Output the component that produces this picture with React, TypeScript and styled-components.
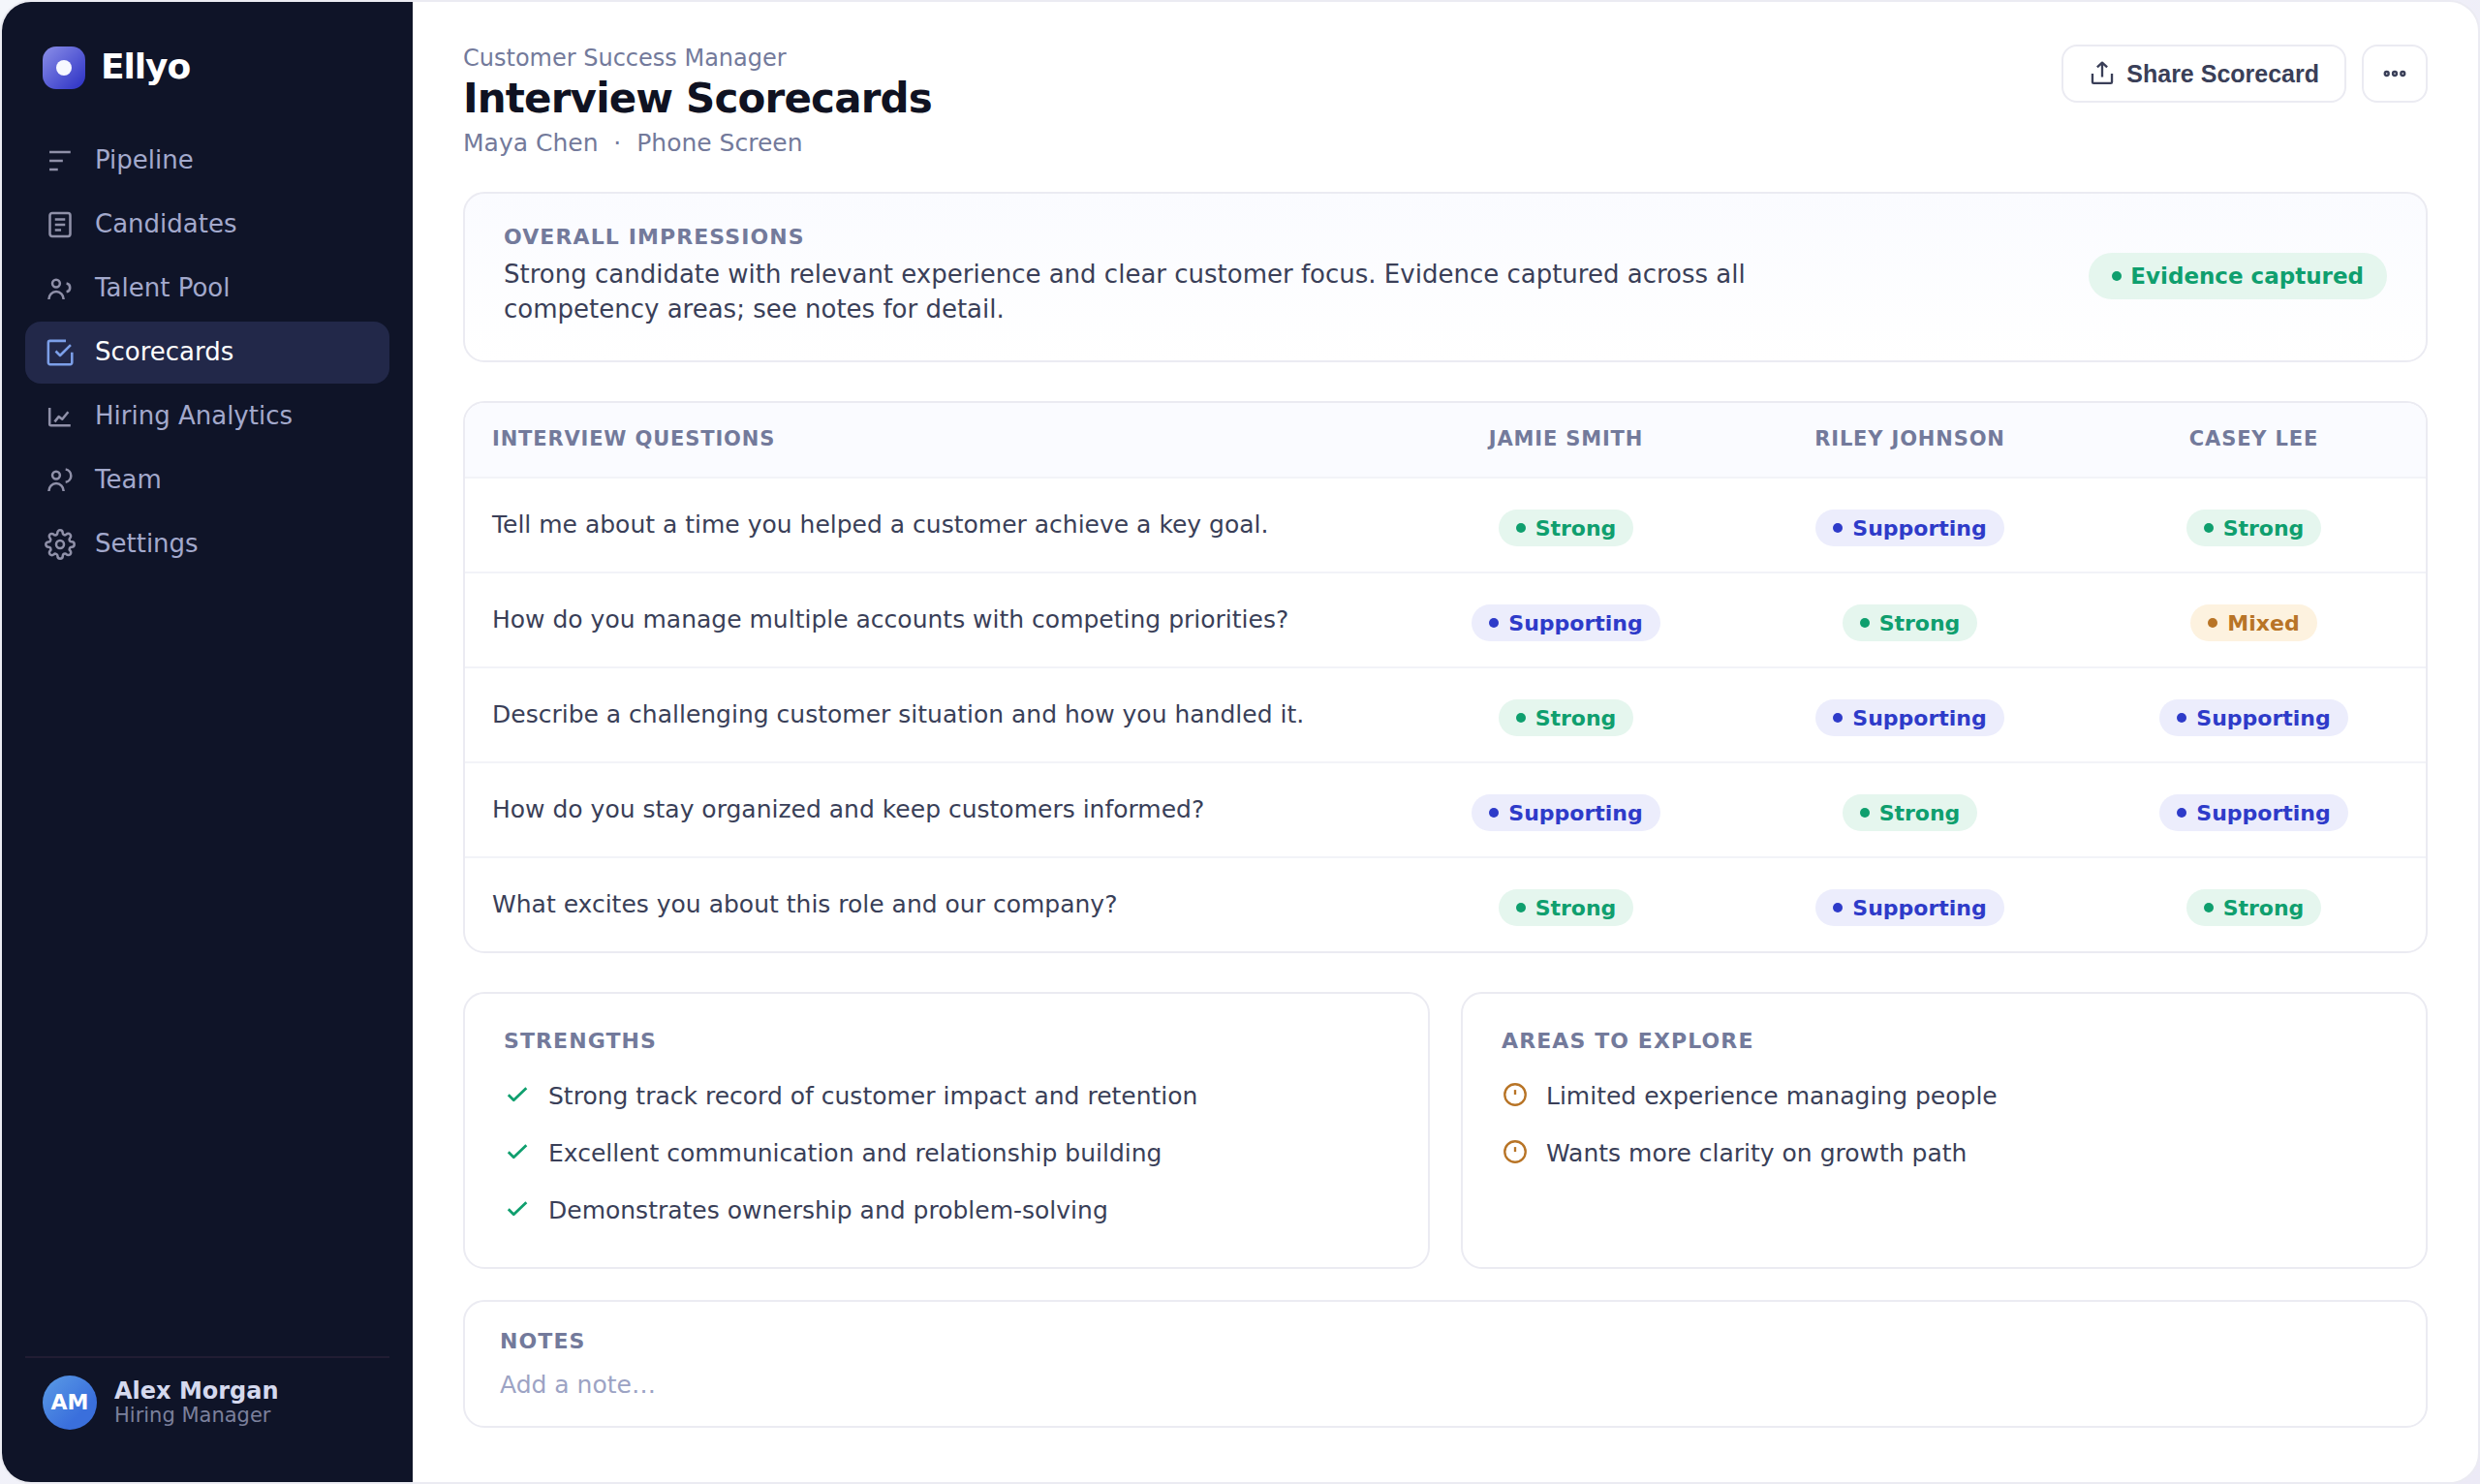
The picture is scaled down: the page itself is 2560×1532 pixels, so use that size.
import React from "react";
import styled, { createGlobalStyle, css } from "styled-components";

const color = {
  ink: "#0f1222",
  text: "#3a3f58",
  muted: "#737a9b",
  faint: "#9ca3c4",
  line: "#ebebf2",
  rowLine: "#f2f3f8",
  tint: "#fafbff",
  side: "#0f1428",
  sideActive: "#222849",
  sideText: "#a3a9cc",
  sideIcon: "#8f90a8",
  blue: "#2e3bc9",
  green: "#0f9f6e",
  amber: "#b87426",
};

const GlobalStyle = createGlobalStyle`
  *, *::before, *::after { box-sizing: border-box; }
  body {
    margin: 0;
    background: linear-gradient(135deg, #f4f6fb 0%, #eceaf6 100%);
    color: ${color.text};
    font-family: "DejaVu Sans", sans-serif;
    font-size: 25px;
  }
  h1, h2, p, ul { margin: 0; padding: 0; }
`;

const Frame = styled.div`
  display: flex;
  min-height: 100vh;
  border: 2px solid ${color.line};
  border-radius: 32px;
  background: #fff;
  overflow: hidden;
`;

/* Sidebar */

const Sidebar = styled.aside`
  display: flex;
  flex-direction: column;
  flex: none;
  width: 424px;
  padding: 46px 24px 54px;
  background: ${color.side};
`;

const Brand = styled.div`
  display: flex;
  align-items: center;
  gap: 16px;
  padding: 0 18px;
  height: 44px;
  color: #fff;
  font-size: 36px;
  font-weight: 700;
  line-height: 40px;
  letter-spacing: -0.03em;
`;

const BrandName = styled.span`
  padding-bottom: 2px;
`;

const BrandMark = styled.span`
  display: grid;
  place-items: center;
  width: 44px;
  height: 44px;
  border-radius: 14px;
  background: linear-gradient(135deg, #8b8fe8 0%, #2a2fc4 100%);

  &::after {
    content: "";
    width: 16px;
    height: 16px;
    border-radius: 50%;
    background: #f7f8ff;
  }
`;

const Nav = styled.nav`
  display: flex;
  flex-direction: column;
  gap: 2px;
  margin-top: 42px;
`;

const NavLink = styled.a<{ $active?: boolean }>`
  display: flex;
  align-items: center;
  gap: 18px;
  height: 64px;
  padding: 0 18px;
  border-radius: 16px;
  color: ${(p) => (p.$active ? "#fff" : color.sideText)};
  background: ${(p) => (p.$active ? color.sideActive : "transparent")};
  font-size: 26px;
  line-height: 30px;
  text-decoration: none;

  svg {
    color: ${(p) => (p.$active ? "#7c9fe8" : color.sideIcon)};
  }
`;

const NavText = styled.span`
  padding-bottom: 2px;
`;

const User = styled.div`
  display: flex;
  align-items: center;
  gap: 18px;
  margin-top: auto;
  padding: 18px 18px 0;
  border-top: 2px solid #211d33;
`;

const Avatar = styled.span`
  display: grid;
  place-items: center;
  width: 56px;
  height: 56px;
  padding-bottom: 2px;
  border-radius: 50%;
  background: linear-gradient(135deg, #5b9ce6 0%, #3a6fdc 70%);
  color: #fff;
  font-size: 22px;
  font-weight: 700;
`;

const UserName = styled.div`
  color: #d5d9ee;
  font-size: 24px;
  font-weight: 700;
  line-height: 26px;
`;

const UserRole = styled.div`
  color: #7b809c;
  font-size: 21px;
  line-height: 24px;
`;

/* Main column */

const Main = styled.main`
  flex: 1;
  min-width: 0;
  padding: 44px 52px;
`;

const Header = styled.header`
  display: flex;
  align-items: flex-start;
  justify-content: space-between;
  margin-bottom: 35px;
`;

const Eyebrow = styled.p`
  color: ${color.muted};
  font-size: 24px;
  line-height: 28px;
`;

const Title = styled.h1`
  margin-top: 4px;
  color: ${color.ink};
  font-size: 42px;
  font-weight: 700;
  line-height: 48px;
  letter-spacing: -0.02em;
`;

const Subtitle = styled.p`
  margin-top: 7px;
  color: ${color.muted};
  line-height: 30px;
  white-space: pre;
`;

const Actions = styled.div`
  display: flex;
  gap: 16px;
`;

const Button = styled.button<{ $square?: boolean }>`
  display: inline-flex;
  align-items: center;
  justify-content: center;
  gap: 11px;
  height: 60px;
  padding: 0 ${(p) => (p.$square ? "18px" : "26px")};
  border: 2px solid ${color.line};
  border-radius: 16px;
  background: #fff;
  color: ${color.text};
  font-family: "Liberation Sans", Arial, sans-serif;
  font-size: 25px;
  font-weight: 700;
`;

const card = css`
  border: 2px solid ${color.line};
  border-radius: 22px;
  background: #fff;
`;

const label = css`
  color: ${color.muted};
  font-size: 22px;
  font-weight: 700;
  line-height: 26px;
  letter-spacing: 0.05em;
  text-transform: uppercase;
`;

const Heading = styled.h2`
  ${label}
`;

const Summary = styled.section`
  ${card}
  display: flex;
  align-items: center;
  justify-content: space-between;
  gap: 40px;
  padding: 32px 40px 35px;
  background: linear-gradient(180deg, ${color.tint} 0%, #fff 100%);
`;

const SummaryText = styled.p`
  max-width: 1400px;
  margin-top: 7px;
  font-size: 26px;
  line-height: 36px;
`;

type Tone = "strong" | "supporting" | "mixed";

const tones: Record<Tone, { fg: string; bg: string; text: string }> = {
  strong: { fg: color.green, bg: "#e5f6ee", text: "Strong" },
  supporting: { fg: color.blue, bg: "#ecedfc", text: "Supporting" },
  mixed: { fg: color.amber, bg: "#fdf2df", text: "Mixed" },
};

const Pill = styled.span<{ $tone: Tone; $large?: boolean }>`
  display: flex;
  align-items: center;
  flex: none;
  gap: ${(p) => (p.$large ? "9px" : "10px")};
  width: fit-content;
  height: ${(p) => (p.$large ? "48px" : "38px")};
  margin: 0 auto;
  padding: 0 ${(p) => (p.$large ? "24px" : "18px")};
  border-radius: 24px;
  background: ${(p) => tones[p.$tone].bg};
  color: ${(p) => tones[p.$tone].fg};
  font-size: ${(p) => (p.$large ? "23px" : "22px")};
  font-weight: 700;

  &::before {
    content: "";
    width: 10px;
    height: 10px;
    border-radius: 50%;
    background: currentColor;
  }
`;

const TableCard = styled.section`
  ${card}
  margin-top: 40px;
  overflow: hidden;
`;

const Table = styled.table`
  width: 100%;
  border-collapse: separate;
  border-spacing: 0;
  table-layout: fixed;
`;

const HeadCell = styled.th`
  ${label}
  width: 17.54%;
  height: 78px;
  padding: 0 0 2px;
  border-bottom: 2px solid ${color.rowLine};
  background: ${color.tint};
  font-size: 21px;
  letter-spacing: 0.04em;
  text-align: center;

  &:first-child {
    width: auto;
    padding-left: 28px;
    text-align: left;
  }
`;

const Row = styled.tr`
  & > * {
    height: 98px;
    border-bottom: 2px solid ${color.rowLine};
  }
  &:last-child > * {
    height: 96px;
    border-bottom: 0;
  }
`;

const Question = styled.th`
  padding: 0 0 2px 28px;
  font-weight: 400;
  text-align: left;
`;

const Rating = styled.td`
  padding: 6px 0 0;
`;

const Columns = styled.div`
  display: grid;
  grid-template-columns: 1fr 1fr;
  gap: 32px;
  margin-top: 40px;
`;

const Panel = styled.section`
  ${card}
  padding: 36px 40px 40px;
`;

const List = styled.ul`
  display: grid;
  gap: 23px;
  margin-top: 26px;
  list-style: none;
`;

const Item = styled.li<{ $color: string }>`
  display: flex;
  align-items: flex-start;
  gap: 18px;
  line-height: 36px;

  svg {
    margin-top: 2px;
    color: ${(p) => p.$color};
  }
`;

const Notes = styled.section`
  ${card}
  display: flex;
  flex-direction: column;
  margin-top: 32px;
  padding: 28px 36px 25px;
`;

const NotesLabel = styled.label`
  ${label}
`;

const NotesInput = styled.input`
  width: 100%;
  height: 36px;
  margin-top: 13px;
  padding: 0;
  border: 0;
  outline: 0;
  background: transparent;
  color: ${color.text};
  font: inherit;

  &::placeholder {
    color: ${color.faint};
    opacity: 1;
  }
`;

/* Icons */

const Glyph = styled.svg`
  display: block;
  flex: none;
  fill: none;
  stroke: currentColor;
  stroke-linejoin: round;
`;

type IconProps = { size?: number; stroke?: number; children: React.ReactNode };

const Icon = ({ size = 36, stroke = 1.7, children }: IconProps) => (
  <Glyph width={size} height={size} viewBox="0 0 24 24" strokeWidth={stroke} aria-hidden="true">
    {children}
  </Glyph>
);

const person = (
  <>
    <circle cx="9.3" cy="8.4" r="2.6" />
    <path d="M4.3 19.4v-.3a5.05 5.05 0 0 1 10.1 0v.3" />
  </>
);

const nav = [
  {
    name: "Pipeline",
    icon: <path d="M4.7 6h14.5M4.7 12h9.2M4.7 18h5.8" />,
  },
  {
    name: "Candidates",
    icon: (
      <>
        <rect x="5" y="4" width="14" height="16" rx="1.6" />
        <path d="M8.5 8.3h7M8.5 12h7M8.5 15.7h4.2" />
      </>
    ),
  },
  {
    name: "Talent Pool",
    icon: (
      <>
        {person}
        <path d="M16.4 8.4a2.95 2.95 0 0 1 0 5.8" />
      </>
    ),
  },
  {
    name: "Scorecards",
    active: true,
    icon: (
      <>
        <path d="M16 3.9H5.1a1.2 1.2 0 0 0-1.2 1.2v13.8a1.2 1.2 0 0 0 1.2 1.2h13.9a1.2 1.2 0 0 0 1.2-1.2v-7" />
        <path d="M9 11l3 3 7.3-7.3" />
      </>
    ),
  },
  {
    name: "Hiring Analytics",
    icon: (
      <>
        <path d="M4.8 6v11.2a1 1 0 0 0 1 1h13.4" />
        <path d="M8.3 15.6l2.8-3.5 2.4 1.7 4.1-5" />
      </>
    ),
  },
  {
    name: "Team",
    icon: (
      <>
        {person}
        <path d="M15.8 4.4a4.4 4.4 0 0 1 0 8.7" />
      </>
    ),
  },
  {
    name: "Settings",
    icon: (
      <g transform="translate(12 12) scale(.89) translate(-12 -12)" strokeWidth="1.9">
        <circle cx="12" cy="12" r="3" />
        <path d="M19.4 15a1.65 1.65 0 0 0 .33 1.82l.06.06a2 2 0 0 1 0 2.83 2 2 0 0 1-2.83 0l-.06-.06a1.65 1.65 0 0 0-1.82-.33 1.65 1.65 0 0 0-1 1.51V21a2 2 0 0 1-2 2 2 2 0 0 1-2-2v-.09A1.65 1.65 0 0 0 9 19.4a1.65 1.65 0 0 0-1.82.33l-.06.06a2 2 0 0 1-2.83 0 2 2 0 0 1 0-2.83l.06-.06a1.65 1.65 0 0 0 .33-1.82 1.65 1.65 0 0 0-1.51-1H3a2 2 0 0 1-2-2 2 2 0 0 1 2-2h.09A1.65 1.65 0 0 0 4.6 9a1.65 1.65 0 0 0-.33-1.82l-.06-.06a2 2 0 0 1 0-2.83 2 2 0 0 1 2.83 0l.06.06a1.65 1.65 0 0 0 1.82.33H9a1.65 1.65 0 0 0 1-1.51V3a2 2 0 0 1 2-2 2 2 0 0 1 2 2v.09a1.65 1.65 0 0 0 1 1.51 1.65 1.65 0 0 0 1.82-.33l.06-.06a2 2 0 0 1 2.83 0 2 2 0 0 1 0 2.83l-.06.06a1.65 1.65 0 0 0-.33 1.82V9a1.65 1.65 0 0 0 1.51 1H21a2 2 0 0 1 2 2 2 2 0 0 1-2 2h-.09a1.65 1.65 0 0 0-1.51 1z" />
      </g>
    ),
  },
];

const candidates = ["Jamie Smith", "Riley Johnson", "Casey Lee"];

const questions: { text: string; ratings: Tone[] }[] = [
  {
    text: "Tell me about a time you helped a customer achieve a key goal.",
    ratings: ["strong", "supporting", "strong"],
  },
  {
    text: "How do you manage multiple accounts with competing priorities?",
    ratings: ["supporting", "strong", "mixed"],
  },
  {
    text: "Describe a challenging customer situation and how you handled it.",
    ratings: ["strong", "supporting", "supporting"],
  },
  {
    text: "How do you stay organized and keep customers informed?",
    ratings: ["supporting", "strong", "supporting"],
  },
  {
    text: "What excites you about this role and our company?",
    ratings: ["strong", "supporting", "strong"],
  },
];

const strengths = [
  "Strong track record of customer impact and retention",
  "Excellent communication and relationship building",
  "Demonstrates ownership and problem-solving",
];

const areas = ["Limited experience managing people", "Wants more clarity on growth path"];

export default function App() {
  return (
    <>
      <GlobalStyle />
      <Frame>
        <Sidebar>
          <Brand>
            <BrandMark />
            <BrandName>Ellyo</BrandName>
          </Brand>
          <Nav aria-label="Main">
            {nav.map((item) => (
              <NavLink
                key={item.name}
                href="#"
                $active={item.active}
                aria-current={item.active ? "page" : undefined}
              >
                <Icon>{item.icon}</Icon>
                <NavText>{item.name}</NavText>
              </NavLink>
            ))}
          </Nav>
          <User>
            <Avatar>AM</Avatar>
            <div>
              <UserName>Alex Morgan</UserName>
              <UserRole>Hiring Manager</UserRole>
            </div>
          </User>
        </Sidebar>

        <Main>
          <Header>
            <div>
              <Eyebrow>Customer Success Manager</Eyebrow>
              <Title>Interview Scorecards</Title>
              <Subtitle>{"Maya Chen \u00a0·\u00a0 Phone Screen"}</Subtitle>
            </div>
            <Actions>
              <Button type="button">
                <Icon size={28} stroke={2}>
                  <path d="M3.4 12v7.5a1 1 0 0 0 1 1h15.2a1 1 0 0 0 1-1V12" />
                  <path d="M12 15V2.5M7.6 6.4L12 2.3l4.4 4.1" />
                </Icon>
                Share Scorecard
              </Button>
              <Button type="button" $square aria-label="More actions">
                <Icon size={28} stroke={2}>
                  <circle cx="4.9" cy="12" r="1.7" />
                  <circle cx="12" cy="12" r="1.7" />
                  <circle cx="19.1" cy="12" r="1.7" />
                </Icon>
              </Button>
            </Actions>
          </Header>

          <Summary>
            <div>
              <Heading>Overall Impressions</Heading>
              <SummaryText>
                Strong candidate with relevant experience and clear customer focus. Evidence
                captured across all competency areas; see notes for detail.
              </SummaryText>
            </div>
            <div>
              <Pill $tone="strong" $large>
                Evidence captured
              </Pill>
            </div>
          </Summary>

          <TableCard>
            <Table>
              <thead>
                <tr>
                  <HeadCell scope="col">Interview Questions</HeadCell>
                  {candidates.map((name) => (
                    <HeadCell key={name} scope="col">
                      {name}
                    </HeadCell>
                  ))}
                </tr>
              </thead>
              <tbody>
                {questions.map((q) => (
                  <Row key={q.text}>
                    <Question scope="row">{q.text}</Question>
                    {q.ratings.map((tone, i) => (
                      <Rating key={candidates[i]}>
                        <Pill $tone={tone}>{tones[tone].text}</Pill>
                      </Rating>
                    ))}
                  </Row>
                ))}
              </tbody>
            </Table>
          </TableCard>

          <Columns>
            <Panel>
              <Heading>Strengths</Heading>
              <List>
                {strengths.map((text) => (
                  <Item key={text} $color={color.green}>
                    <Icon size={28} stroke={2.4}>
                      <path d="M4.1 12.3l4.7 4.6L20 6.3" />
                    </Icon>
                    {text}
                  </Item>
                ))}
              </List>
            </Panel>
            <Panel>
              <Heading>Areas to Explore</Heading>
              <List>
                {areas.map((text) => (
                  <Item key={text} $color={color.amber}>
                    <Icon size={28} stroke={2}>
                      <circle cx="12" cy="12" r="9.2" />
                      <path d="M12 7.8v4.2" />
                    </Icon>
                    {text}
                  </Item>
                ))}
              </List>
            </Panel>
          </Columns>

          <Notes>
            <NotesLabel htmlFor="note">Notes</NotesLabel>
            <NotesInput id="note" type="text" placeholder="Add a note…" />
          </Notes>
        </Main>
      </Frame>
    </>
  );
}
